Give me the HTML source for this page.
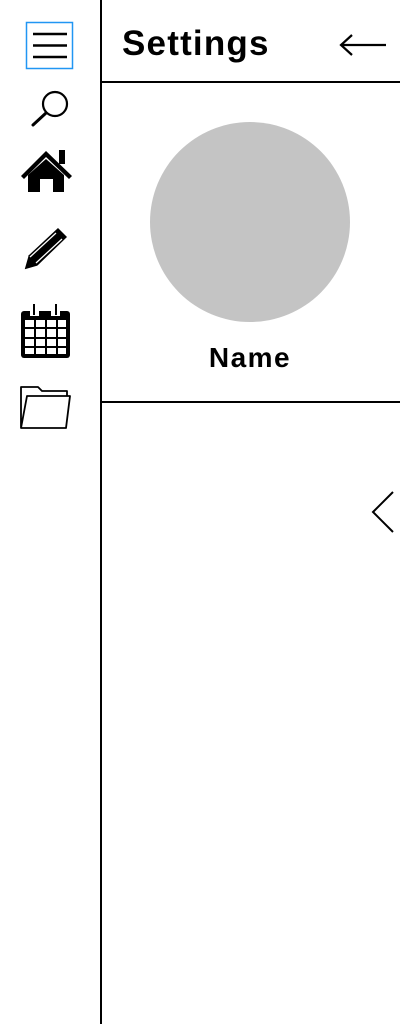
<!DOCTYPE html>
<html><head><style>
html,body{margin:0;padding:0;background:#fff;width:400px;height:1024px;overflow:hidden;position:relative;font-family:"Liberation Sans",sans-serif}
.a{position:absolute}
</style></head><body>
<div class="a" style="left:100px;top:0;width:2px;height:1024px;background:#000"></div>
<div class="a" style="left:101px;top:81px;width:299px;height:2px;background:#000"></div>
<div class="a" style="left:101px;top:401px;width:299px;height:2px;background:#000"></div>
<div class="a" style="left:122px;top:24px;font-size:35px;font-weight:bold;letter-spacing:1.2px;line-height:40px">Settings</div>
<svg class="a" style="left:0;top:0" width="400" height="1024">
<path d="M386 45H341M352 35L341 45L352 55" stroke="#000" stroke-width="2.2" fill="none"/>
<rect x="26.5" y="22.5" width="46" height="46" fill="none" stroke="#2196f3" stroke-width="1.5"/>
<path d="M33 34H67M33 45.5H67M33 57H67" stroke="#000" stroke-width="2.5"/>
<circle cx="55" cy="104" r="12" fill="none" stroke="#000" stroke-width="2.2"/>
<path d="M46 113L33 125" stroke="#000" stroke-width="3" stroke-linecap="round"/>
<path d="M21 176L46 151L72 176L69 179L46 157L24 179Z" fill="#000"/>
<rect x="59" y="150" width="6" height="14" fill="#000"/>
<path d="M28 175L46 159L64 175V192H53V179H40V192H28Z" fill="#000"/>
<path d="M24 270L28 256L58 228L67 237L37 266Z" fill="#000"/>
<path d="M30 257L56 233M36 263L62 239" stroke="#fff" stroke-width="1.3"/>
<path d="M28 256L24 270L38 266" fill="none" stroke="#fff" stroke-width="1"/>
<rect x="21" y="311" width="49" height="47" rx="3" fill="#000"/>
<g fill="#fff"><rect x="25" y="320" width="9" height="7"/><rect x="36" y="320" width="9" height="7"/><rect x="47" y="320" width="9" height="7"/><rect x="58" y="320" width="8" height="7"/>
<rect x="25" y="329" width="9" height="8"/><rect x="36" y="329" width="9" height="8"/><rect x="47" y="329" width="9" height="8"/><rect x="58" y="329" width="8" height="8"/>
<rect x="25" y="339" width="9" height="7"/><rect x="36" y="339" width="9" height="7"/><rect x="47" y="339" width="9" height="7"/><rect x="58" y="339" width="8" height="7"/>
<rect x="25" y="348" width="9" height="6"/><rect x="36" y="348" width="9" height="6"/><rect x="47" y="348" width="9" height="6"/><rect x="58" y="348" width="8" height="6"/>
<rect x="30" y="311" width="9" height="5"/><rect x="51" y="311" width="9" height="5"/></g>
<path d="M34 304V315M56 304V315" stroke="#000" stroke-width="2"/>
<path d="M21 428V387H38L42 391H67V396M21 428L27 396H70L66 428Z" fill="none" stroke="#000" stroke-width="1.8" stroke-linejoin="round"/>
<circle cx="250" cy="222" r="100" fill="#c4c4c4"/>
<path d="M393 492L373 512L393 532" fill="none" stroke="#000" stroke-width="2"/>
</svg>
<div class="a" style="left:140px;width:220px;top:341px;text-align:center;font-size:28px;font-weight:bold;letter-spacing:1.5px;line-height:34px">Name</div>
</body></html>
